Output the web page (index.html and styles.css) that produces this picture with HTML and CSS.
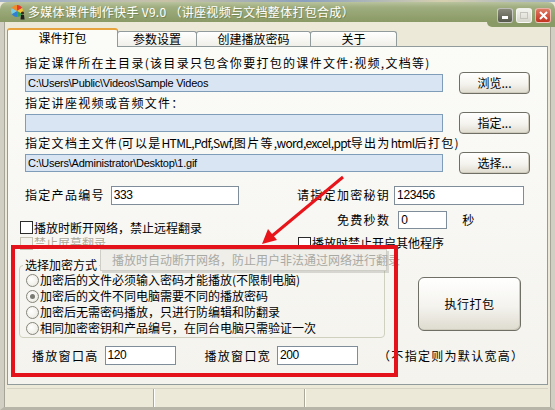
FILE: index.html
```html
<!DOCTYPE html>
<html lang="zh-CN">
<head>
<meta charset="utf-8">
<title>多媒体课件制作快手</title>
<link rel="stylesheet" href="styles.css">
</head>
<body>
<div class="window">
  <div class="desk"></div>
  <div class="titlebar">
    <svg class="appicon" width="16" height="16" viewBox="0 0 16 16">
      <path d="M7 7 L7 1 A6 6 0 0 1 12.2 4 Z" fill="#e53b2c"/>
      <path d="M7 7 L12.2 4 A6 6 0 0 1 12.2 10 Z" fill="#f4c430"/>
      <path d="M7 7 L12.2 10 A6 6 0 0 1 7 13 Z" fill="#3aa44a"/>
      <path d="M7 7 L7 13 A6 6 0 0 1 1.8 10 Z" fill="#2f7fd6"/>
      <path d="M7 7 L1.8 10 A6 6 0 0 1 1.8 4 Z" fill="#7bd0e8"/>
      <path d="M7 7 L1.8 4 A6 6 0 0 1 7 1 Z" fill="#f08a2a"/>
      <circle cx="12.5" cy="9" r="1.6" fill="#3a2a1a"/>
      <path d="M11 11 L14 11 L14.6 15.5 L10.5 15.5 Z" fill="#1f1f1f"/>
    </svg>
    <span class="title">多媒体课件制作快手 V9.0 （讲座视频与文档整体打包合成）</span>
    <div class="winbtns">
      <span class="wb min"><i></i></span>
      <span class="wb max"><i></i></span>
      <span class="wb close">
        <svg width="9" height="9" viewBox="0 0 9 9"><path d="M1 1 L8 8 M8 1 L1 8" stroke="#fff" stroke-width="2"/></svg>
      </span>
    </div>
  </div>
  <div class="client">
    <div class="tabs">
      <div class="tab active t1">课件打包</div>
      <div class="tab t2">参数设置</div>
      <div class="tab t3">创建播放密码</div>
      <div class="tab t4">关于</div>
    </div>
    <div class="panel">
      <div class="files">
        <div class="lbl">指定课件所在主目录(该目录只包含你要打包的课件文件:视频,文档等)</div>
        <div class="frow">
          <div class="path">C:\Users\Public\Videos\Sample Videos</div>
          <div class="btn">浏览...</div>
        </div>
        <div class="lbl">指定讲座视频或音频文件：</div>
        <div class="frow">
          <div class="path"></div>
          <div class="btn">指定...</div>
        </div>
        <div class="lbl">指定文档主文件<span class="lat">(</span>可以是<span class="lat">HTML,Pdf,Swf,</span>图片等<span class="lat">,word,excel,ppt</span>导出为<span class="lat">html</span>后打包<span class="lat">)</span></div>
        <div class="frow">
          <div class="path">C:\Users\Administrator\Desktop\1.gif</div>
          <div class="btn">选择...</div>
        </div>
      </div>

      <div class="opts">
        <div class="cell prod">
          <span class="lbl-i">指定产品编号</span>
          <div class="field w-prod">333</div>
        </div>
        <div class="cell key">
          <span class="lbl-i">请指定加密秘钥</span>
          <div class="field w-key">123456</div>
        </div>
        <div class="cell chk-a">
          <span class="cb"></span><span class="cbt">播放时断开网络，禁止远程翻录</span>
        </div>
        <div class="cell free">
          <span class="lbl-i">免费秒数</span>
          <div class="field w-free">0</div>
          <span class="lbl-i sec">秒</span>
        </div>
        <div class="cell chk-b disabled">
          <span class="cb"></span><span class="cbt">禁止屏幕翻录</span>
        </div>
        <div class="cell chk-c">
          <span class="cb"></span><span class="cbt">播放时禁止开启其他程序</span>
        </div>
      </div>

      <div class="grouprow">
        <fieldset class="group">
          <legend>选择加密方式</legend>
          <div class="radio"><span class="rb"></span>加密后的文件必须输入密码才能播放(不限制电脑)</div>
          <div class="radio"><span class="rb on"></span>加密后的文件不同电脑需要不同的播放密码</div>
          <div class="radio"><span class="rb"></span>加密后无需密码播放，只进行防编辑和防翻录</div>
          <div class="radio"><span class="rb"></span>相同加密密钥和产品编号，在同台电脑只需验证一次</div>
        </fieldset>
        <div class="btn big">执行打包</div>
      </div>

      <div class="sizerow">
        <span class="lbl-i">播放窗口高</span>
        <div class="field w-h">120</div>
        <span class="lbl-i gapw">播放窗口宽</span>
        <div class="field w-w">200</div>
        <span class="lbl-i note">（不指定则为默认宽高）</span>
      </div>

      <div class="tooltip">播放时自动断开网络，防止用户非法通过网络进行翻录</div>
      <div class="redbox"></div>
      <svg class="arrow" width="100" height="80" viewBox="0 0 100 80">
        <line x1="93" y1="7" x2="22" y2="66" stroke="#e8141a" stroke-width="3"/>
        <polygon points="12,74 27,70 18,59" fill="#e8141a"/>
      </svg>
    </div>
    <div class="status">
      <div class="sp1"></div>
      <div class="sp2"></div>
      <div class="sp3"></div>
    </div>
  </div>
</div>
</body>
</html>
```

FILE: styles.css
```css
* { box-sizing: border-box; }
html, body { margin: 0; padding: 0; }
body {
  font-family: "Noto Sans CJK SC", "Liberation Sans", sans-serif;
  font-size: 12px;
  color: #000;
  background: #ece9d8;
}
.window {
  width: 555px;
  height: 410px;
  display: flex;
  flex-direction: column;
  background: #ece9d8;
  overflow: hidden;
}
.desk {
  height: 2px;
  background: linear-gradient(90deg, #9fb0c8 0%, #c9c2a6 30%, #8aa0c0 55%, #d6cfae 80%, #9fb0c8 100%);
}
.titlebar {
  height: 20px;
  position: relative;
  display: flex;
  align-items: center;
  padding-left: 10px;
  border-radius: 7px 7px 0 0;
  background: linear-gradient(180deg, #b9c39e 0%, #a0ae80 25%, #95a472 60%, #8a9a66 100%);
}
.titlebar::after {
  content: "";
  position: absolute;
  right: 0;
  top: 100%;
  width: 68px;
  height: 5px;
  border-bottom-left-radius: 8px;
  background: #8a9a66;
}
.appicon { flex: none; }
.title {
  margin-left: 2px;
  color: #fff;
  font-size: 12px;
  line-height: 14px;
  letter-spacing: 0.3px;
  white-space: nowrap;
  text-shadow: 1px 1px 0 rgba(60, 70, 30, 0.3);
}
.winbtns {
  position: absolute;
  right: 4px;
  top: 6px;
  display: flex;
  gap: 3px;
  z-index: 2;
}
.wb {
  width: 16px;
  height: 15px;
  border-radius: 3px;
  display: flex;
  align-items: center;
  justify-content: center;
  border: 1px solid rgba(255, 255, 255, 0.6);
}
.wb.min { background: linear-gradient(180deg, #8a8a7c, #55584a); }
.wb.min i { width: 6px; height: 3px; background: #fff; margin-top: 4px; }
.wb.max { background: linear-gradient(180deg, #f4f4ef, #d6d6cc); }
.wb.max i { width: 8px; height: 7px; border: 1px solid #c4c4bc; }
.wb.close { background: linear-gradient(180deg, #e07a64, #c2331f); }

.client {
  flex: 1;
  display: flex;
  flex-direction: column;
  padding: 6px 3px 0 3px;
  border-left: 4px solid #d1cfc3;
  border-right: 4px solid #d1cfc3;
  border-bottom: 3px solid #b7b5a8;
  box-shadow: inset 1px 0 0 #a6a496, inset -1px 0 0 #a6a496;
}
.tabs {
  height: 18px;
  display: flex;
  align-items: flex-end;
  position: relative;
  z-index: 2;
}
.tab {
  height: 15px;
  line-height: 14px;
  text-align: center;
  border: 1px solid #919b9c;
  border-bottom: none;
  border-radius: 3px 3px 0 0;
  background: linear-gradient(180deg, #ffffff, #f0efe9);
  margin-right: -1px;
}
.tab.active {
  height: 19px;
  line-height: 16px;
  margin-bottom: -1px;
  border-top: 2px solid #e6a33e;
  background: #fbfbf8;
}
.t1 { width: 111px; }
.t2 { width: 80px; }
.t3 { width: 115px; }
.t4 { width: 87px; }

.panel {
  position: relative;
  width: 541px;
  height: 339px;
  border: 1px solid #919b9c;
  background: linear-gradient(180deg, #fbfbf8 0%, #f4f3ee 100%);
}
.files { padding: 7px 0 0 17px; }
.lbl {
  height: 18px;
  line-height: 18px;
  letter-spacing: 1.3px;
  white-space: nowrap;
}
.lat { letter-spacing: -0.6px; }
.frow {
  height: 22px;
  display: grid;
  grid-template-columns: 418px 71px;
  column-gap: 16px;
  align-items: center;
}
.path {
  height: 18px;
  border: 1px solid #7f9db9;
  background: #dae5f3;
  font-family: "Liberation Sans", sans-serif;
  font-size: 11px;
  line-height: 16px;
  padding-left: 2px;
  letter-spacing: -0.25px;
  white-space: nowrap;
}
.btn {
  height: 22px;
  border: 1px solid #6f6f66;
  border-radius: 4px;
  background: linear-gradient(180deg, #ffffff 0%, #f4f3ee 55%, #dedbcf 100%);
  box-shadow: inset -1px -1px 0 #cfcbbd;
  display: flex;
  align-items: center;
  justify-content: center;
  line-height: 14px;
}

.opts {
  margin-top: 11px;
  padding-left: 12px;
  display: grid;
  grid-template-columns: 277px 1fr;
  grid-template-rows: 20px 30px 16px;
}
.cell { display: flex; align-items: center; white-space: nowrap; }
.lbl-i { letter-spacing: 1.3px; line-height: 14px; }
.field {
  height: 19px;
  border: 1px solid #7f8c99;
  background: #fff;
  font-family: "Liberation Sans", sans-serif;
  font-size: 12px;
  line-height: 17px;
  padding-left: 2px;
  letter-spacing: -0.4px;
}
.prod { padding-left: 5px; }
.w-prod { width: 128px; margin-left: 6px; }
.w-key { width: 130px; margin-left: 4px; }
.chk-a { align-self: end; height: 15px; }
.free { padding-left: 40px; align-self: start; margin-top: 6px; height: 18px; }
.w-free { width: 49px; height: 18px; margin-left: 8px; }
.sec { margin-left: 15px; }
.cb {
  width: 13px;
  height: 13px;
  border: 1px solid #2b2b2b;
  background: #fff;
  flex: none;
}
.cbt { margin-left: 1px; line-height: 14px; }
.chk-c { padding-left: 1px; }
.disabled .cb { border-color: #c4c2b4; background: #f4f3ee; }
.disabled .cbt { color: #aca899; text-shadow: 1px 1px 0 #fff; }

.grouprow {
  margin-top: 7px;
  padding-left: 11px;
  display: flex;
  align-items: flex-start;
}
.group {
  width: 366px;
  margin: 0;
  padding: 0 0 1px 6px;
  border: 1px solid #d0d0bf;
  border-radius: 4px;
  min-width: 0;
}
.group legend {
  padding: 0 2px;
  margin-left: -3px;
  line-height: 14px;
  font-size: 12px;
}
.radio {
  height: 16px;
  display: flex;
  align-items: center;
  white-space: nowrap;
  line-height: 14px;
}
.rb {
  width: 13px;
  height: 13px;
  border-radius: 50%;
  border: 1px solid #86857a;
  background: radial-gradient(circle at 40% 40%, #ffffff 0%, #f1f0ea 60%, #d9d7cb 100%);
  margin-right: 1px;
  flex: none;
  display: flex;
  align-items: center;
  justify-content: center;
}
.rb.on::after {
  content: "";
  width: 5px;
  height: 5px;
  border-radius: 50%;
  background: #7a7a72;
}
.btn.big {
  width: 103px;
  height: 54px;
  margin-left: 33px;
  margin-top: 19px;
  border-radius: 6px;
  letter-spacing: 0.5px;
}

.sizerow {
  margin-top: 8px;
  padding-left: 24px;
  height: 19px;
  display: flex;
  align-items: center;
  white-space: nowrap;
}
.w-h { width: 71px; margin-left: 6px; }
.gapw { margin-left: 29px; }
.w-w { width: 81px; margin-left: 6px; }
.note { margin-left: 20px; }

.tooltip {
  position: absolute;
  left: 92px;
  top: 202px;
  width: 287px;
  height: 22px;
  padding-left: 11px;
  line-height: 20px;
  color: #a9a9a4;
  background: #efeee9;
  border: 1px solid #cfcec6;
  box-shadow: 2px 2px 0 rgba(120, 120, 110, 0.25);
  white-space: nowrap;
  z-index: 3;
}
.redbox {
  position: absolute;
  left: 3px;
  top: 198px;
  width: 387px;
  height: 132px;
  border: 4px solid #e4121a;
  z-index: 4;
}
.arrow {
  position: absolute;
  left: 242px;
  top: 123px;
  z-index: 4;
}

.status {
  margin-top: 3px;
  height: 19px;
  display: flex;
  border-top: 1px solid #d6d3c4;
}
.status > div {
  height: 100%;
  border-right: 1px solid #aca899;
  box-shadow: 1px 0 0 #fff;
}
.sp1 { width: 147px; }
.sp2 { width: 151px; }
.sp3 { flex: 1; border-right: none !important; box-shadow: none !important; }
```
